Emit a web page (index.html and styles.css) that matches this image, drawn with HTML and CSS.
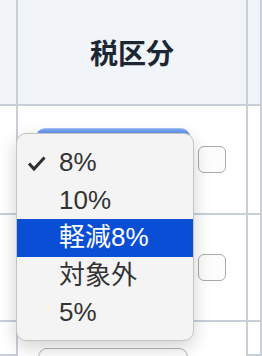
FILE: index.html
```html
<!DOCTYPE html>
<html lang="ja">
  <head>
    <meta charset="UTF-8" />
    <meta name="viewport" content="width=device-width, initial-scale=1.0" />
    <title>税区分</title>
    <link rel="stylesheet" href="styles.css">
  </head>
  <body>
    <div class="tax_table">
      <div class="cell head side"></div>
      <div class="cell head title">税区分</div>
      <div class="cell head"></div>

      <div class="cell side"></div>
      <div class="cell main">
        <div class="select_box active"></div>
        <span class="check_box"></span>
      </div>
      <div class="cell"></div>

      <div class="cell side"></div>
      <div class="cell main">
        <div class="select_box"></div>
        <span class="check_box"></span>
      </div>
      <div class="cell"></div>

      <div class="cell side"></div>
      <div class="cell main last">
        <div class="select_box"></div>
        <span class="check_box"></span>
      </div>
      <div class="cell"></div>
    </div>

    <!-- 開いているプルダウン -->
    <ul class="menu">
      <li class="menu_item checked">
        <svg class="check_mark" width="20" height="16" viewBox="0 0 20 16">
          <polyline points="2,7.5 7,13 17.5,1.5" fill="none" stroke="#2e2e2e" stroke-width="3" />
        </svg>8%
      </li>
      <li class="menu_item">10%</li>
      <li class="menu_item selected">軽減8%</li>
      <li class="menu_item">対象外</li>
      <li class="menu_item">5%</li>
    </ul>
  </body>
</html>
```

FILE: styles.css
```css
body {
  margin: 0;
  background-color: #fff;
  font-family: "Liberation Sans", "Noto Sans CJK JP", sans-serif;
  overflow: hidden;
}
.tax_table {
  display: grid;
  grid-template-columns: 18px 230px 1fr;
  grid-template-rows: 106px 109px 107px 34px;
  overflow: hidden;
}
.cell {
  box-sizing: border-box;
  border-right: 2px solid #c8cfd8;
  border-bottom: 2px solid #c8cfd8;
}
.head {
  background-color: #f1f4f8;
}
.title {
  display: flex;
  align-items: center;
  justify-content: center;
  font-family: "Noto Sans CJK JP", sans-serif;
  font-size: 28px;
  font-weight: bold;
  color: #1d2733;
}
.main {
  display: flex;
  align-items: center;
  padding-left: 20px;
}
.main.last {
  align-items: flex-start;
  padding-top: 26px;
  border-bottom: none;
  overflow: hidden;
}
.select_box {
  box-sizing: border-box;
  flex-shrink: 0;
  width: 150px;
  height: 54px;
  border: 1px solid #b4b4b4;
  border-radius: 9px;
  background-color: #fdfdfd;
}
.select_box.active {
  height: 64px;
  margin-left: -2px;
  width: 154px;
  margin-right: -2px;
  border: none;
  border-top: 1px solid #a6c2f4;
  background: linear-gradient(#7ea8f1, #5a8ee9 8%, #3b73e2 20%);
}
.check_box {
  box-sizing: border-box;
  flex-shrink: 0;
  width: 28px;
  height: 27px;
  margin-left: 10px;
  border: 1px solid #a9a9a9;
  border-radius: 6px;
  background-color: #fcfcfc;
}
.main.last .check_box {
  display: none;
}
.menu {
  position: absolute;
  left: 16px;
  top: 133px;
  width: 178px;
  box-sizing: border-box;
  margin: 0;
  padding: 10px 0 8px;
  list-style: none;
  background-color: #f4f4f4;
  border: 1px solid #c4c4c4;
  border-radius: 10px;
  box-shadow: 0 6px 18px rgba(0, 0, 0, 0.18);
}
.menu_item {
  position: relative;
  height: 37.5px;
  line-height: 37.5px;
  padding-left: 42px;
  font-size: 26px;
  color: #333;
}
.menu_item.selected {
  background-color: #0a4ed6;
  color: #fff;
}
.check_mark {
  position: absolute;
  left: 10px;
  top: 12px;
}
```
